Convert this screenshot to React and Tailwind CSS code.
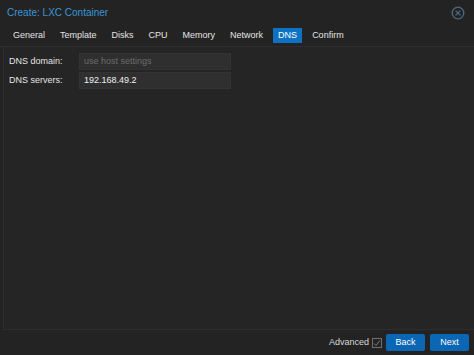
const tabs = ['General', 'Template', 'Disks', 'CPU', 'Memory', 'Network', 'DNS', 'Confirm'];

function Field({ label, value, placeholder }) {
  return (
    <div className="flex items-center h-[17px]">
      <span className="w-[70px] text-[#e4e4e4]">{label}</span>
      <div className="w-[152px] h-[17px] bg-[#2f2f2f] border border-[#333] flex items-center px-[4px]">
        {value ? <span className="text-[#f0f0f0]">{value}</span> : <span className="text-[#6b6b6b]">{placeholder}</span>}
      </div>
    </div>
  );
}

export default function App() {
  return (
    <div className="w-[474px] h-[355px] bg-[#232323] flex flex-col text-[9px] text-[#e4e4e4]" style={{ fontFamily: '"Liberation Sans", Arial, sans-serif' }}>
      {/* Title */}
      <div className="h-[26px] flex items-center justify-between pl-[7px] pr-[9px] pb-[1px]">
        <span className="text-[10px] text-[#3b95d6]">Create: LXC Container</span>
        <svg width="14" height="14" viewBox="0 0 14 14" className="text-[#4d6a85]">
          <circle cx="7" cy="7" r="5.8" fill="none" stroke="currentColor" strokeWidth="1.3" />
          <path d="M4.6 4.6 L9.4 9.4 M9.4 4.6 L4.6 9.4" stroke="currentColor" strokeWidth="1.3" />
        </svg>
      </div>
      {/* Tabs */}
      <div className="h-[21px] flex items-start pt-[2px] pl-[8px] gap-[5px] border-b border-[#2e2e2e]">
        {tabs.map(t => (
          <div key={t} className={t === 'DNS' ? 'h-[15px] px-[5px] flex items-center bg-[#0e72c4] text-white' : 'h-[15px] px-[5px] flex items-center text-[#e4e4e4]'}>
            {t}
          </div>
        ))}
      </div>
      {/* Panel */}
      <div className="flex-1 ml-[3px] border-l border-b border-[#2e2e2e] bg-[#252525] pt-[6px] pl-[5px] flex flex-col gap-[2px]">
        <Field label="DNS domain:" placeholder="use host settings" />
        <Field label="DNS servers:" value="192.168.49.2" />
      </div>
      {/* Footer */}
      <div className="h-[25px] flex items-center justify-end pr-[5px] gap-[5px]">
        <span className="text-[#d8d8d8]">Advanced</span>
        <svg width="10" height="10" viewBox="0 0 10 10" className="-ml-[2px]">
          <rect x="0.5" y="0.5" width="9" height="9" fill="none" stroke="#6f6f6f" />
          <path d="M2 5.5 L4 7.5 L8 2.5" fill="none" stroke="#7a7a7a" strokeWidth="1" />
        </svg>
        <button className="w-[39px] h-[17px] bg-[#0b67b4] text-white rounded-[2px] -ml-[1px]">Back</button>
        <button className="w-[39px] h-[17px] bg-[#0b67b4] text-white rounded-[2px]">Next</button>
      </div>
    </div>
  );
}
